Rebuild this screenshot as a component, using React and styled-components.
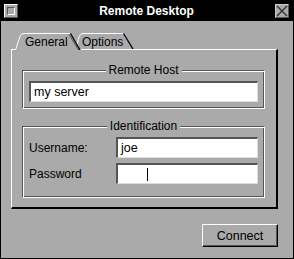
import React from "react";
import styled, { createGlobalStyle } from "styled-components";

const GlobalStyle = createGlobalStyle`
  html, body {
    margin: 0;
    padding: 0;
    background: #aaaaaa;
  }
  body {
    font-family: "Liberation Sans", Arial, Helvetica, sans-serif;
    color: #000;
  }
`;

const Window = styled.div`
  width: 294px;
  height: 259px;
  box-sizing: border-box;
  border: 1px solid #000;
  background: #aaaaaa;
  display: flex;
  flex-direction: column;
`;

const TitleBar = styled.div`
  height: 20px;
  background: #000;
  display: flex;
  align-items: center;
  padding: 0 4px 0 3px;
`;

const TitleText = styled.div`
  flex: 1;
  text-align: center;
  color: #fff;
  font-weight: bold;
  font-size: 12px;
  line-height: 16px;
`;

const MinButton = styled.div`
  width: 14px;
  height: 14px;
  box-sizing: border-box;
  border: 1px solid;
  border-color: #fff #555 #555 #fff;
  background: #aaaaaa;
  display: flex;
  align-items: center;
  justify-content: center;
`;

const MinGlyph = styled.div`
  width: 8px;
  height: 8px;
  box-sizing: border-box;
  border: 1px solid;
  border-color: #555 #fff #fff #555;
  background: #aaaaaa;
`;

const CloseButton = styled.div`
  width: 14px;
  height: 14px;
  box-sizing: border-box;
  border: 1px solid;
  border-color: #ccc #555 #555 #ccc;
  background: #aaaaaa;
  display: flex;

  svg {
    display: block;
  }
`;

const Body = styled.div`
  flex: 1;
  display: flex;
  flex-direction: column;
  padding: 12px 15px 11px 10px;
`;

const TabBar = styled.div`
  display: flex;
  height: 16px;
  padding-left: 4px;
`;

const Tab = styled.div`
  position: relative;
  z-index: ${(p) => (p.$active ? 2 : 1)};
  width: ${(p) => p.$width}px;
  height: ${(p) => (p.$active ? 17 : 16)}px;
  margin-left: ${(p) => p.$overlap || 0}px;
  padding-left: ${(p) => p.$indent}px;
  box-sizing: border-box;
  font-size: 12px;
  line-height: 16px;
  padding-top: 1px;
  cursor: default;

  svg {
    position: absolute;
    left: 0;
    top: 0;
  }
`;

const TabLabel = styled.span`
  position: relative;
`;

const Panel = styled.div`
  border-style: solid;
  border-width: 1px 2px 2px 1px;
  border-color: #fff #000 #000 #fff;
  padding: 20px 11px 9px 10px;
  display: flex;
  flex-direction: column;
  gap: 17px;
`;

const Group = styled.div`
  position: relative;
  border: 1px solid;
  border-color: #555 #fff #fff #555;
  box-shadow: inset 1px 1px #fff, inset -1px -1px #555;
  padding: 10px 6px ${(p) => p.$bottom}px 6px;
  display: flex;
  flex-direction: column;
  gap: 5px;
`;

const Legend = styled.div`
  position: absolute;
  top: -8px;
  left: 50%;
  transform: translateX(-50%);
  padding: 0 3px;
  background: #aaaaaa;
  font-size: 12px;
  line-height: 14px;
  white-space: nowrap;
`;

const Row = styled.div`
  display: grid;
  grid-template-columns: 87px 1fr;
  align-items: center;
`;

const Label = styled.div`
  font-size: 12px;
  line-height: 14px;
`;

const Field = styled.div`
  height: 21px;
  box-sizing: border-box;
  background: #fff;
  border-style: solid;
  border-width: 2px 1px 1px 2px;
  border-color: #555 #dddddd #dddddd #555;
  padding-left: 3px;
  display: flex;
  align-items: center;
  font-size: 12.5px;
  white-space: nowrap;
`;

const Caret = styled.span`
  width: 1px;
  height: 13px;
  margin-left: 26px;
  background: #000;
`;

const Footer = styled.div`
  display: flex;
  justify-content: flex-end;
  margin-top: 15px;
`;

const Button = styled.button`
  width: 76px;
  height: 23px;
  box-sizing: border-box;
  border: 1px solid;
  border-color: #fff #000 #000 #fff;
  box-shadow: inset -1px -1px #555;
  background: #aaaaaa;
  padding: 0;
  font-family: inherit;
  font-size: 12.5px;
  color: #000;
  cursor: pointer;
`;

function GeneralShape() {
  return (
    <svg width="66" height="17" viewBox="0 0 66 17">
      <polygon points="0,17 5,3 8,0 55,0 66,17" fill="#aaaaaa" />
      <path d="M0.5 17 L5 3.5 Q6 0.5 9 0.5 L55 0.5" stroke="#fff" fill="none" />
      <path d="M54 1.5 L63.5 17" stroke="#555" fill="none" />
      <path d="M55.5 0.5 L65 17" stroke="#000" strokeWidth="1.3" fill="none" />
    </svg>
  );
}

function OptionsShape() {
  return (
    <svg width="57" height="16" viewBox="0 0 57 16">
      <polygon points="0,16 0,9 3,2 6,0 46,0 57,16" fill="#aaaaaa" />
      <path d="M0.5 11 Q1.5 0.5 6 0.5 L46 0.5" stroke="#fff" fill="none" />
      <path d="M46.5 0.5 L56 16" stroke="#000" strokeWidth="1.3" fill="none" />
    </svg>
  );
}

export default function App() {
  return (
    <>
      <GlobalStyle />
      <Window>
        <TitleBar>
          <MinButton>
            <MinGlyph />
          </MinButton>
          <TitleText>Remote Desktop</TitleText>
          <CloseButton>
            <svg width="12" height="12" viewBox="0 0 12 12">
              <path d="M1 1 L11 11 M11 1 L1 11" stroke="#333" strokeWidth="1.4" />
            </svg>
          </CloseButton>
        </TitleBar>
        <Body>
          <TabBar>
            <Tab $active $width={66} $indent={10}>
              <GeneralShape />
              <TabLabel>General</TabLabel>
            </Tab>
            <Tab $width={57} $indent={5} $overlap={-4}>
              <OptionsShape />
              <TabLabel>Options</TabLabel>
            </Tab>
          </TabBar>
          <Panel>
            <Group $bottom={6}>
              <Legend>Remote Host</Legend>
              <Field>my server</Field>
            </Group>
            <Group $bottom={13}>
              <Legend>Identification</Legend>
              <Row>
                <Label>Username:</Label>
                <Field>joe</Field>
              </Row>
              <Row>
                <Label>Password</Label>
                <Field>
                  <Caret />
                </Field>
              </Row>
            </Group>
          </Panel>
          <Footer>
            <Button>Connect</Button>
          </Footer>
        </Body>
      </Window>
    </>
  );
}
